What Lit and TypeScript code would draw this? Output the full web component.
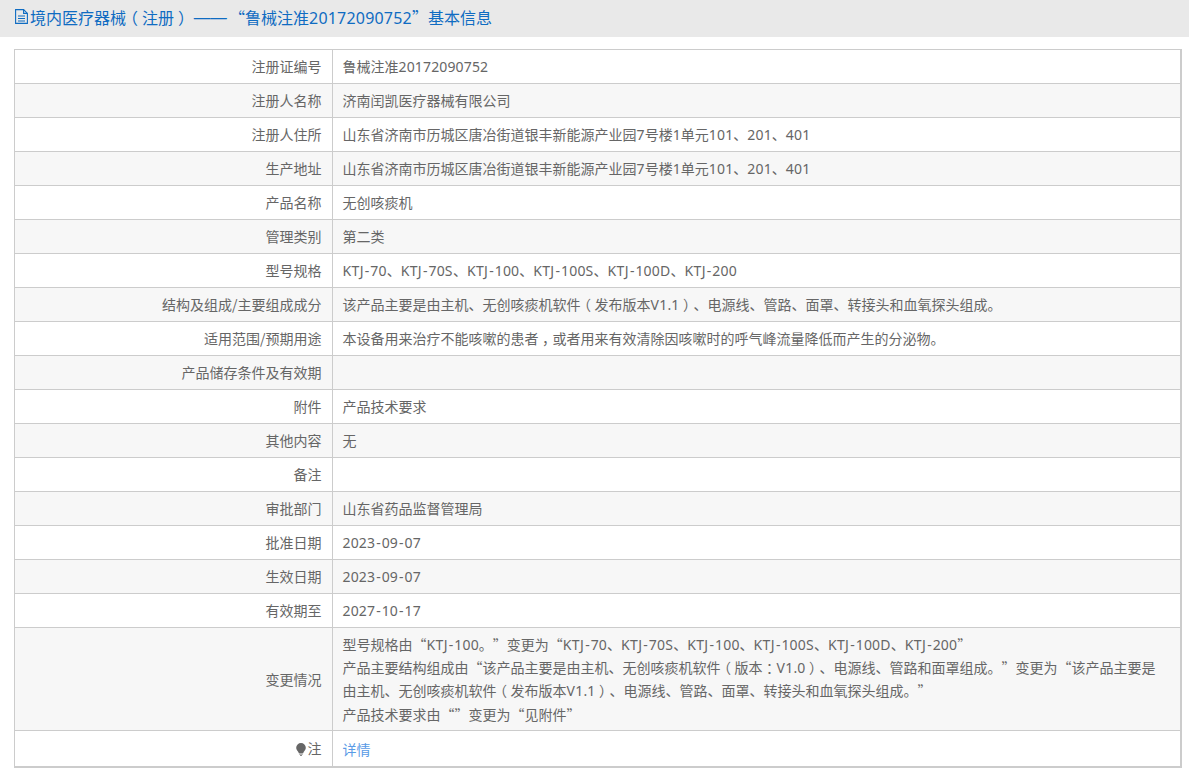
import { LitElement, html, css } from "lit";
import { customElement } from "lit/decorators.js";

const rows: [string, string | string[]][] = [
  ["注册证编号", "鲁械注准20172090752"],
  ["注册人名称", "济南闰凯医疗器械有限公司"],
  ["注册人住所", "山东省济南市历城区唐冶街道银丰新能源产业园7号楼1单元101、201、401"],
  ["生产地址", "山东省济南市历城区唐冶街道银丰新能源产业园7号楼1单元101、201、401"],
  ["产品名称", "无创咳痰机"],
  ["管理类别", "第二类"],
  ["型号规格", "KTJ-70、KTJ-70S、KTJ-100、KTJ-100S、KTJ-100D、KTJ-200"],
  ["结构及组成/主要组成成分", "该产品主要是由主机、无创咳痰机软件（发布版本V1.1）、电源线、管路、面罩、转接头和血氧探头组成。"],
  ["适用范围/预期用途", "本设备用来治疗不能咳嗽的患者，或者用来有效清除因咳嗽时的呼气峰流量降低而产生的分泌物。"],
  ["产品储存条件及有效期", ""],
  ["附件", "产品技术要求"],
  ["其他内容", "无"],
  ["备注", ""],
  ["审批部门", "山东省药品监督管理局"],
  ["批准日期", "2023-09-07"],
  ["生效日期", "2023-09-07"],
  ["有效期至", "2027-10-17"],
  ["变更情况", [
    "型号规格由“KTJ-100。”变更为“KTJ-70、KTJ-70S、KTJ-100、KTJ-100S、KTJ-100D、KTJ-200”",
    "产品主要结构组成由“该产品主要是由主机、无创咳痰机软件（版本：V1.0）、电源线、管路和面罩组成。”变更为“该产品主要是由主机、无创咳痰机软件（发布版本V1.1）、电源线、管路、面罩、转接头和血氧探头组成。”",
    "产品技术要求由“”变更为“见附件”",
  ]],
];

/** Mixed runs: Latin letters, digits, hyphens and centred full-width punctuation each get their own metrics. */
function fmt(text: string) {
  return text.split(/([A-Za-z]+|[\d.]+|-|[（），：])/).map((part) => {
    if (!part) return "";
    if (/^[A-Za-z]/.test(part)) return html`<span class="la">${part}</span>`;
    if (/^[\d.]/.test(part)) return html`<span class="di">${part}</span>`;
    if (part === "-") return html`<span class="hy">${part}</span>`;
    if (/^[（），：]$/.test(part)) return html`<span class="pu">${part}</span>`;
    return part;
  });
}

@customElement("app-root")
export class AppRoot extends LitElement {
  static styles = css`
    :host {
      display: block;
      background: #fff;
      font-family: "Noto Sans CJK SC", "Noto Sans", sans-serif;
      font-size: 14px;
      color: #666;
      text-spacing-trim: space-all;
    }
    .la, .di, .hy {
      font-family: "Noto Sans", "Noto Sans CJK SC", sans-serif;
      line-height: 1;
    }
    .la { letter-spacing: 0.35px; }
    .di { letter-spacing: 0.15px; }
    .hy { padding: 0 1px; }
    .pu {
      display: inline-block;
      width: 1em;
      line-height: 1;
      text-align: center;
      font-feature-settings: "halt";
    }
    .title {
      height: 37px;
      box-sizing: border-box;
      padding: 0 0 4px 15px;
      background: #e9e9e9;
      display: flex;
      align-items: center;
      color: #0f6cc2;
      font-size: 16px;
      white-space: pre;
    }
    .title svg { flex: none; margin-right: 2px; }
    .title .di { letter-spacing: 0.2px; }
    .dash {
      padding: 0 3px;
      font-family: "Noto Sans", sans-serif;
      font-size: 18px;
      line-height: 1;
      letter-spacing: -1.5px;
    }
    .wrap { padding: 12px 7px 0 14px; }
    table {
      width: 100%;
      border-collapse: collapse;
      table-layout: fixed;
      border-style: solid;
      border-color: #ccc;
      border-width: 1px 2px 2px 1px;
    }
    td {
      border: 1px solid #ccc;
      height: 34px;
      box-sizing: border-box;
      padding: 0 9.500px 2px;
      line-height: 24px;
      vertical-align: middle;
    }
    tr:nth-child(even) td { background: #f7f7f7; }
    td.k { width: 318px; text-align: right; padding-right: 10.500px; }
    td.k.tall { padding-bottom: 0; }
    td.multi { padding: 5px 20px 4px 9.500px; line-height: 23.200px; }
    td.last { height: 37px; }
    td.link { padding-bottom: 0; }
    a { color: #5a9be6; text-decoration: none; }
    .bulb { vertical-align: -2px; margin-right: 2px; }
  `;

  render() {
    return html`
      <div class="title"><svg width="13" height="15" viewBox="0 0 13 15" fill="none" stroke="#0f6cc2" stroke-width="1.1"><path d="M.6.6h8l3.800 3.800v10H.6z"/><path d="M8.600.6v3.800h3.800M3 7h7M3 9.500h7M3 12h7"/></svg><span>境内医疗器械${fmt("（")}注册${fmt("）")}<span class="dash">——</span>“鲁械注准${fmt("20172090752")}”基本信息</span></div>
      <div class="wrap">
        <table>
          <tbody>
            ${rows.map(([k, v]) =>
              Array.isArray(v)
                ? html`<tr>
                    <td class="k tall">${k}</td>
                    <td class="multi">${v.map((l) => html`<div>${fmt(l)}</div>`)}</td>
                  </tr>`
                : html`<tr>
                    <td class="k">${k}</td>
                    <td>${fmt(v)}</td>
                  </tr>`
            )}
            <tr>
              <td class="k last"><svg class="bulb" width="10" height="13" viewBox="0 0 10 13"><path fill="#666" d="M5 0a4.800 4.800 0 0 1 4.800 4.800c0 1.900-1.200 2.900-2.100 4.200-.3.500-.4.900-.5 1.200H2.800c-.1-.3-.2-.7-.5-1.200C1.400 7.700.2 6.700.2 4.800A4.800 4.800 0 0 1 5 0zM3.200 10.800h3.600v.8H3.200zM4 12h2v.8H4z"/></svg>注</td>
              <td class="last link"><a href="#">详情</a></td>
            </tr>
          </tbody>
        </table>
      </div>
    `;
  }
}
